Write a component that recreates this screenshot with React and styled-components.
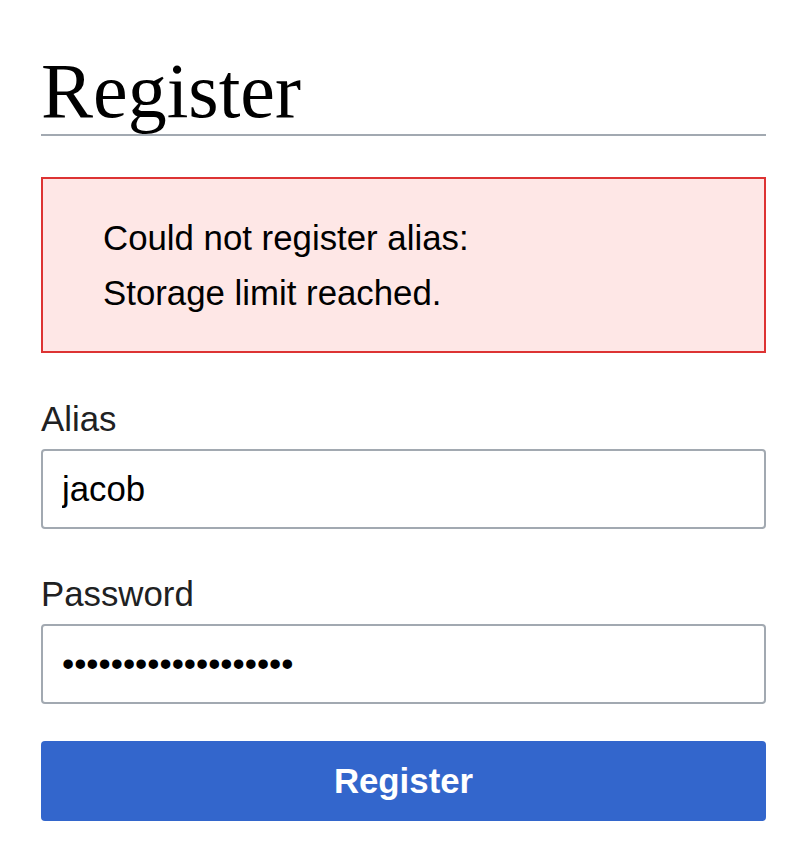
import React from "react";
import styled, { createGlobalStyle } from "styled-components";

const GlobalStyle = createGlobalStyle`
  html, body { margin: 0; padding: 0; background: #ffffff; }
  body { font-family: "Liberation Sans", Arial, sans-serif; color: #202122; }
  * { box-sizing: border-box; }
`;

const Page = styled.main`
  padding: 48px 40px 40px 41px;
`;

const Heading = styled.h1`
  margin: 0;
  font-family: "Liberation Serif", "Times New Roman", serif;
  font-weight: normal;
  font-size: 78px;
  line-height: 86px;
  color: #000000;
  border-bottom: 2px solid #a2a9b1;
`;

const ErrorBox = styled.div`
  margin-top: 41px;
  border: 2px solid #d33;
  background: #fee7e6;
  padding: 31px 20px 31px 60px;
  color: #000000;
  font-size: 34.8px;
  line-height: 55px;
`;

const ErrorLine = styled.p`
  margin: 0;
`;

const Form = styled.form`
  display: flex;
  flex-direction: column;
  margin-top: 42px;
`;

const Field = styled.div`
  display: flex;
  flex-direction: column;
  margin-bottom: ${(p) => p.$gap}px;
`;

const Label = styled.label`
  font-size: 34.8px;
  line-height: 48px;
  color: #202122;
  margin-bottom: 6px;
`;

const Input = styled.input`
  height: 80px;
  width: 100%;
  border: 2px solid #a2a9b1;
  border-radius: 4px;
  padding: 0 19px;
  font-family: "Liberation Sans", Arial, sans-serif;
  font-size: 34.8px;
  color: #000000;
  background: #ffffff;
  outline: none;
`;

const Button = styled.button`
  height: 80px;
  width: 100%;
  border: none;
  border-radius: 4px;
  background: #3366cc;
  color: #ffffff;
  font-family: "Liberation Sans", Arial, sans-serif;
  font-weight: bold;
  font-size: 34.8px;
  cursor: pointer;
`;

export default function App() {
  return (
    <>
      <GlobalStyle />
      <Page>
        <Heading>Register</Heading>
        <ErrorBox>
          <ErrorLine>Could not register alias:</ErrorLine>
          <ErrorLine>Storage limit reached.</ErrorLine>
        </ErrorBox>
        <Form onSubmit={(e) => e.preventDefault()}>
          <Field $gap={41}>
            <Label htmlFor="alias">Alias</Label>
            <Input id="alias" type="text" defaultValue="jacob" />
          </Field>
          <Field $gap={37}>
            <Label htmlFor="password">Password</Label>
            <Input id="password" type="password" defaultValue="abcdefghijklmnopqrs" />
          </Field>
          <Button type="submit">Register</Button>
        </Form>
      </Page>
    </>
  );
}
